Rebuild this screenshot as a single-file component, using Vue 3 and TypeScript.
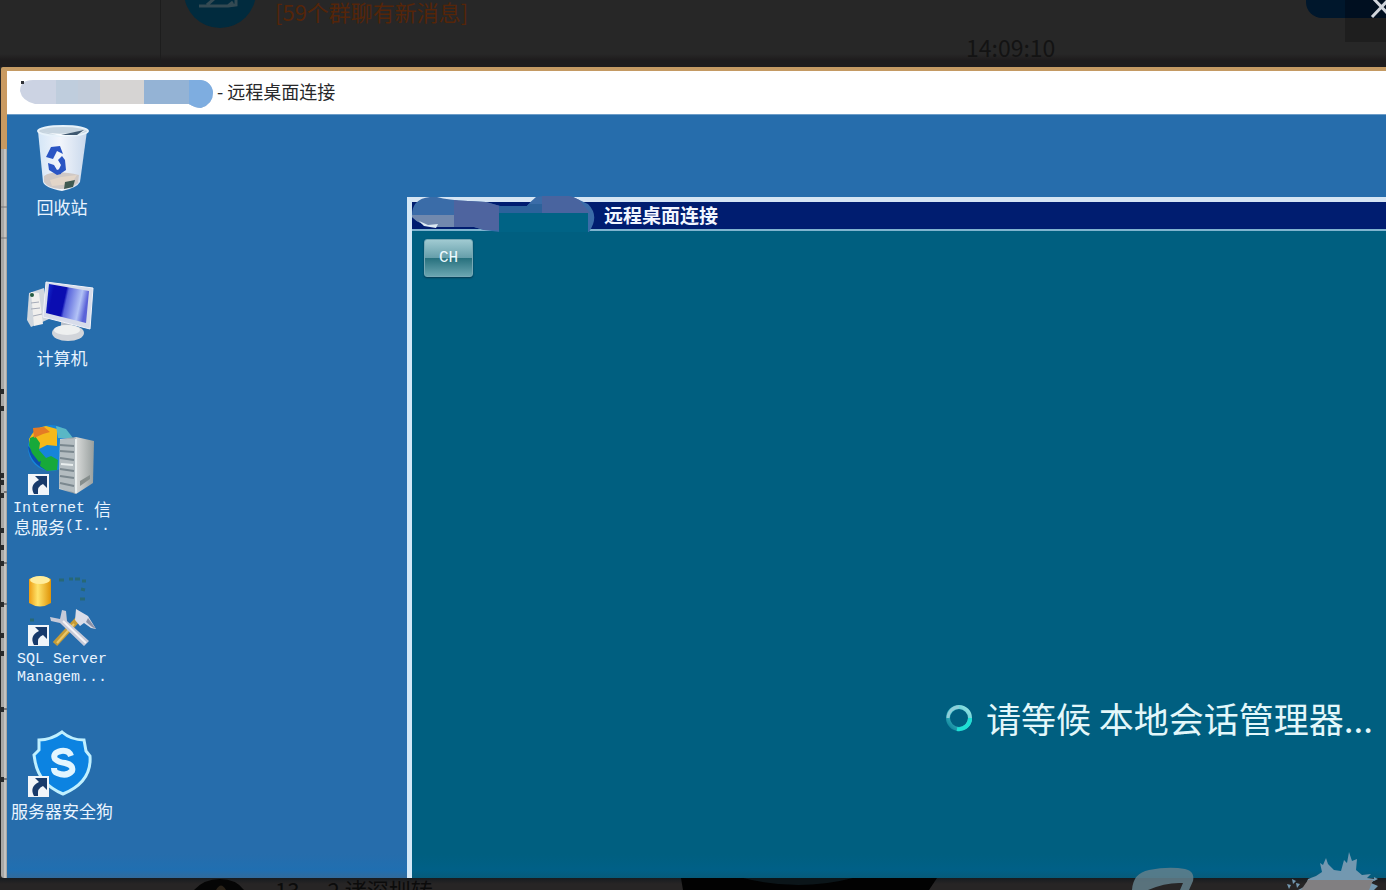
<script setup lang="ts">
interface DesktopItem {
  id: string
  lines: { text: string; latin?: boolean }[][]
  shortcut: boolean
}

const items: DesktopItem[] = [
  { id: 'bin', lines: [[{ text: '回收站' }]], shortcut: false },
  { id: 'computer', lines: [[{ text: '计算机' }]], shortcut: false },
  {
    id: 'iis',
    lines: [
      [{ text: 'Internet ', latin: true }, { text: '信' }],
      [{ text: '息服务' }, { text: '(I...', latin: true }],
    ],
    shortcut: true,
  },
  {
    id: 'sql',
    lines: [[{ text: 'SQL Server', latin: true }], [{ text: 'Managem...', latin: true }]],
    shortcut: true,
  },
  { id: 'dog', lines: [[{ text: '服务器安全狗' }]], shortcut: true },
]

const edgeMarks: number[] = [318, 335, 402, 409, 422, 457, 474, 490, 531, 562, 580, 636, 706]
</script>

<template>
  <div class="page">
    <header class="chat-top">
      <div class="chat-list">
        <svg class="avatar" width="72" height="28" viewBox="0 0 72 28" aria-hidden="true">
          <circle cx="36" cy="-8" r="36" fill="#012b3e" />
          <path d="M15 6h29l5-4M23 5l8-7M44 6l8-1V-3" fill="none" stroke="#344a53" stroke-width="3" />
        </svg>
        <span class="unread">[59个群聊有新消息]</span>
      </div>
      <time class="stamp">14:09:10</time>
      <div class="corner">
        <span class="bubble"></span>
        <button class="close" type="button" aria-label="关闭">
          <svg width="41" height="42" viewBox="0 0 41 42" aria-hidden="true">
            <path d="M27 17L46 -3M27 -3L46 17" stroke="#d0d5dc" stroke-width="3" fill="none" />
          </svg>
        </button>
      </div>
    </header>

    <main class="window">
      <svg class="edge" width="6" height="807" viewBox="0 0 6 807" aria-hidden="true">
        <rect width="6" height="807" fill="#a9a8a6" />
        <rect x="3" width="2" height="807" fill="#c5c3c0" />
        <rect width="6" height="78" fill="#c99a61" />
        <path d="M0 136h6M0 167h6" stroke="#77777a" />
        <rect v-for="y in edgeMarks" :key="y" :y="y" width="3" height="5" fill="#282a2c" />
        <path d="M3 421h3M3 492h3M3 533h3M3 638h3M3 708h3" stroke="#77777a" stroke-width="2" />
      </svg>
      <div class="frame">
        <div class="titlebar">
          <svg class="mask" width="196" height="32" viewBox="0 0 196 32" aria-hidden="true">
            <clipPath id="pill"><path d="M14 4H182A13 13 0 0 1 194 17Q194 28 182 32Q176 32 170 28H16Q3 25 1 15Q1 4 14 4Z" /></clipPath>
            <g clip-path="url(#pill)">
              <rect width="196" height="32" fill="#ccd3e3" />
              <rect x="37" width="22" height="32" fill="#bfcddd" />
              <rect x="59" width="24" height="32" fill="#c2ccda" />
              <rect x="81" width="44" height="32" fill="#d6d4d3" />
              <rect x="125" width="46" height="32" fill="#94b3d5" />
              <rect x="170" width="26" height="32" fill="#7eade0" />
            </g>
            <rect x="2" y="5" width="3" height="3" fill="#303238" />
          </svg>
          <h1 class="title">- 远程桌面连接</h1>
        </div>

        <div class="desktop">
          <nav class="icons" aria-label="桌面">
            <a v-for="item in items" :key="item.id" class="item" href="#">
              <svg class="icon" width="72" height="72" viewBox="0 0 72 72" aria-hidden="true">
                <defs>
                  <linearGradient id="binFill" x1="0" x2="1">
                    <stop offset="0" stop-color="#d4e6f7" /><stop offset=".45" stop-color="#f2f5fb" /><stop offset="1" stop-color="#c8d8ec" />
                  </linearGradient>
                  <linearGradient id="screen" x1="0" x2="1" y2=".2">
                    <stop offset="0" stop-color="#1736d6" /><stop offset=".2" stop-color="#0a0db1" /><stop offset=".48" stop-color="#0a0db1" /><stop offset=".54" stop-color="#5965dc" /><stop offset=".85" stop-color="#b3c3f6" /><stop offset="1" stop-color="#5b63d8" />
                  </linearGradient>
                  <linearGradient id="tower" x1="0" x2="1">
                    <stop offset="0" stop-color="#d1d7d8" /><stop offset=".4" stop-color="#8b979e" /><stop offset=".5" stop-color="#d7d9d8" /><stop offset="1" stop-color="#989f9e" />
                  </linearGradient>
                  <linearGradient id="gold" x1="0" x2="1">
                    <stop offset="0" stop-color="#ed9c12" /><stop offset=".4" stop-color="#ffe46b" /><stop offset="1" stop-color="#df9307" />
                  </linearGradient>
                </defs>

                <g v-if="item.id === 'bin'">
                  <path d="M12 9L17 60Q19 66 36 69Q51 66 54 60L61 9Z" fill="url(#binFill)" />
                  <path d="M18 54Q28 47 53 53L52 61Q45 67 34 67Q22 66 18 60Z" fill="#cfc8c5" />
                  <path d="M24 58l11-3 16-2-6 9-19 2z" fill="#e2d5c8" />
                  <path d="M39 60l10-2-2 7-9 2z" fill="#3f5951" />
                  <ellipse cx="37" cy="9" rx="25" ry="5" fill="#c6d4df" stroke="#e7f2fa" stroke-width="2" />
                  <path d="M14 9Q33 15 61 8Q48 15 35 14Z" fill="#f7fbfe" />
                  <path d="M35 13l23-5-7 5z" fill="#3e5870" />
                  <path d="M20 35l5-10 9-1 3 8-6-3-4 8zM36 34l3 4 1 10-6 4-2-3 3-6-3-5zM31 53l-8-5-1-7 6 2 3 5 5-2-1 6z" fill="#2a55c4" />
                </g>

                <g v-else-if="item.id === 'computer'">
                  <path d="M3 20l15-5 5 31-18 8-4-7z" fill="#cfd6dd" />
                  <path d="M5 19l8 1 4 31-9 2z" fill="#f0efed" />
                  <path d="M5 30l8-1M5 36l9-1M7 43l9-2" stroke="#a5abb8" />
                  <circle cx="6" cy="22" r="2" fill="#245c42" />
                  <path d="M35 48l11 3v8h-11z" fill="#b7bfc9" />
                  <ellipse cx="42" cy="60" rx="16" ry="8" fill="#d2d5da" />
                  <ellipse cx="41" cy="57" rx="13" ry="5" fill="#eef0f0" />
                  <path d="M20 9L67 15L64 56L17 44Z" fill="#d7dcea" stroke="#f2f3fa" />
                  <path d="M23 11L63 18L60 50L20 40Z" fill="url(#screen)" />
                </g>

                <g v-else-if="item.id === 'iis'">
                  <circle cx="25" cy="24" r="23" fill="#1685d8" />
                  <path d="M2 22Q4 40 22 47L20 36L10 30Z" fill="#0c4fae" />
                  <path d="M3 15Q9 3 20 2L31 5V22L21 21L13 25L4 21Z" fill="#f5b91a" />
                  <path d="M4 14l5-2 5 7-1 7 7 8-7 4-7-9-3-8zM15 36l10-4 7 4-1 10-10 1-7-5z" fill="#17a93a" />
                  <path d="M7 4l11-1 6 5-7 2-9 4z" fill="#e47b25" />
                  <path d="M30 2l10 3 7 9H32z" fill="#59b7c5" />
                  <path d="M34 15L50 13L68 17L67 59L50 70L33 65Z" fill="url(#tower)" />
                  <path d="M34 16L50 14V69L33 64Z" fill="#b4bdc1" />
                  <path d="M34 21l14 1M34 27l14 1M34 34l14 2M34 45l14 2M34 52l14 2M34 59l14 3" stroke="#7b888f" stroke-width="2" />
                  <path d="M35 40l12 1M50 15v54" stroke="#e9eeee" stroke-width="2" />
                  <path d="M54 57l10-6v4l-10 7z" fill="#868e8d" />
                </g>

                <g v-else-if="item.id === 'sql'">
                  <path d="M3 4Q14 -1 25 4V28Q14 35 3 28Z" fill="url(#gold)" />
                  <ellipse cx="14" cy="5" rx="10" ry="4" fill="#ffed9c" />
                  <path d="M33 5h5M43 4h4M49 4h5M56 6h4M55 14l4 1M54 24h5M4 45h4" stroke="#276876" stroke-width="3" />
                  <path d="M29 69L54 42" stroke="#c49b37" stroke-width="6" />
                  <path d="M31 68L48 49" stroke="#e8c76a" stroke-width="2" />
                  <path d="M24 42l10 2 2-9 4 1 1 10L63 66l-5 5L34 48l-9-2z" fill="#c7cad8" />
                  <path d="M37 46l23 22" stroke="#f4f3f6" stroke-width="2" />
                  <path d="M50 34l12 7 8 13-5-1-7-5-4 3-5-6z" fill="#dbdde8" />
                  <path d="M62 43l8 11-4-2-6-5z" fill="#8b92a8" />
                </g>

                <g v-else>
                  <path d="M36 6Q45 14 58 14L60 25L64 30Q66 56 37 68Q13 58 9 35L8 29L13 24V14Q25 14 36 6Z" fill="#0c83e1" stroke="#c0f0ff" stroke-width="3" />
                  <path d="M45 30Q43 24 35 25Q26 27 29 33Q32 36 39 37Q48 39 46 45Q41 51 31 47Q28 46 28 42" fill="none" stroke="#e2f5ff" stroke-width="6" />
                </g>

                <g v-if="item.shortcut">
                  <rect x="2" y="50" width="21" height="21" fill="#f1f5f9" />
                  <path d="M9 52h12v12l-4-4q-6 2-5 10H8q-5-9 5-14z" fill="#173a6b" />
                </g>
              </svg>
              <span v-for="(line, i) in item.lines" :key="i" class="line">
                <span v-for="part in line" :key="part.text" :class="{ latin: part.latin }">{{ part.text }}</span>
              </span>
            </a>
          </nav>

          <section class="session">
            <div class="session-bar">
              <h2 class="session-title">远程桌面连接</h2>
            </div>
            <svg class="session-mask" width="190" height="38" viewBox="0 0 190 38" aria-hidden="true">
              <clipPath id="blob">
                <path d="M4 21Q3 3 22 1H29Q40 4 60 5L78 6L92 10L119 10Q122 6 128 1Q150 -3 165 1L180 8Q192 20 181 36H92L76 34L66 31H30Q12 30 4 21Z" />
              </clipPath>
              <g clip-path="url(#blob)">
                <rect width="190" height="38" fill="#3a6ca8" />
                <path d="M4 19H46V34H4Z" fill="#7189ae" />
                <path d="M46 4H91V34H46Z" fill="#4e649f" />
                <path d="M91 8h44v10H91z" fill="#2c629b" />
                <path d="M134 0h34l14 17h-48z" fill="#49649f" />
                <path d="M91 17H180V38H91Z" fill="#006385" />
              </g>
              <path d="M11 25l9 4 10-1-2 4-12-2z" fill="#dce9f3" />
            </svg>
            <div class="session-body">
              <button class="lang" type="button">CH</button>
              <p class="waiting" role="status">
                <svg width="28" height="28" viewBox="0 0 28 28" aria-hidden="true">
                  <defs>
                    <linearGradient id="ring" x1="0" y1="1" x2="1" y2="0">
                      <stop offset="0" stop-color="#097c95" /><stop offset=".5" stop-color="#45c4cc" /><stop offset="1" stop-color="#9fe6e6" />
                    </linearGradient>
                  </defs>
                  <circle cx="14" cy="14" r="11" fill="none" stroke="url(#ring)" stroke-width="4" />
                  <path d="M25 14A11 11 0 0 1 12 25" fill="none" stroke="#1de0d5" stroke-width="4" />
                  <path d="M3 14A11 11 0 0 1 14 3" fill="none" stroke="#8fcdd8" stroke-width="3" />
                </svg>
                <span>请等候 本地会话管理器...</span>
              </p>
            </div>
          </section>
        </div>
      </div>
    </main>

    <footer class="chat-bottom">
      <svg class="peer" width="72" height="12" viewBox="0 0 72 12" aria-hidden="true">
        <path d="M12 12Q22 1 38 1Q54 1 62 12Z" fill="#050505" />
        <path d="M34 12q5-9 10 0z" fill="#292117" />
      </svg>
      <span class="peer-name">13 ... 2 诸深圳转</span>
      <svg class="shade" width="256" height="12" viewBox="0 0 256 12" aria-hidden="true">
        <path d="M0 0H256L248 12H2Z" fill="#020202" />
        <path d="M62 0H172Q118 14 62 0Z" fill="#0b1519" />
      </svg>
    </footer>

    <svg class="watermark" width="256" height="40" viewBox="0 0 256 40" aria-hidden="true">
      <path d="M2 40Q3 23 19 20Q39 16 55 19Q65 21 63 31L59 40H50L53 33Q36 32 18 40Z" fill="#63808c" opacity=".85" />
      <path d="M168 40L176 36L178 29L186 26L192 22L190 13L193 15L196 8L198 14L204 20L211 21L214 10L217 13L219 2L222 11L227 9L226 20L232 25L241 24L237 28L246 29L241 33L248 36L244 40Z" fill="#7398b0" />
      <path d="M171 40L178 30H243L239 40Z" fill="#817f81" />
      <path d="M162 29l4 2-3 3zM157 34l4 1-2 4zM166 33l4 1-3 4zM244 27l4 2-4 2z" fill="#7398b0" />
    </svg>
  </div>
</template>

<style>
body {
  margin: 0;
  background: #272727;
}
</style>

<style scoped>
.page {
  position: relative;
  display: grid;
  grid-template-rows: 67px 1fr 12px;
  min-height: 100vh;
  overflow: hidden;
  background: #272727;
  font-family: "Noto Sans CJK SC", sans-serif;
}

.chat-top {
  display: flex;
  justify-content: space-between;
  height: 67px;
  background: linear-gradient(#272727 54px, #1e1c1d 60px);
}

.chat-list {
  display: flex;
  gap: 19px;
  width: 780px;
  margin-left: 160px;
  padding-left: 23px;
  box-sizing: border-box;
  border-left: 1px solid #1d1d1d;
}

.avatar {
  flex: none;
}

.unread {
  color: #552509;
  font-size: 22px;
  line-height: 22px;
}

.stamp {
  flex: 1;
  padding: 34px 0 0 26px;
  color: #131313;
  font-size: 23px;
  line-height: 26px;
}

.corner {
  display: flex;
  width: 80px;
}

.bubble {
  width: 39px;
  height: 18px;
  border-radius: 0 0 0 16px;
  background: #00172c;
}

.close {
  width: 41px;
  height: 42px;
  padding: 0;
  border: 0;
  background: linear-gradient(#000f20 18px, #1e1e1e 18px);
}

.close svg {
  display: block;
}

.window {
  display: flex;
  margin-left: 1px;
  border-top: 4px solid #c49a63;
  border-radius: 2px 0 0 3px;
  overflow: hidden;
}

.edge {
  flex: none;
}

.frame {
  display: flex;
  flex: 1;
  flex-direction: column;
  min-width: 0;
}

.titlebar {
  display: flex;
  gap: 2px;
  height: 43px;
  padding: 5px 0 0 12px;
  box-sizing: border-box;
  background: #fff;
}

.title,
.session-title {
  margin: 0;
  font-weight: 400;
  line-height: 30px;
  white-space: nowrap;
}

.title {
  color: #28282a;
  font-size: 18px;
}

.desktop {
  display: flex;
  flex: 1;
  border-top: 1px solid #6d9dc8;
  background: linear-gradient(#266dac, #266dac calc(100% - 24px), #206fb1 calc(100% - 8px), #316a9b);
}

.icons {
  display: grid;
  grid-auto-rows: 151px;
  align-content: start;
  width: 110px;
  margin-right: 290px;
  padding-top: 7px;
}

.item {
  display: flex;
  flex-direction: column;
  align-items: center;
  color: #e9f4ff;
  font-size: 17px;
  line-height: 18px;
  text-decoration: none;
}

.icon {
  margin-bottom: 4px;
}

.line {
  display: flex;
  align-items: center;
  height: 18px;
  white-space: pre;
}

.latin {
  font-family: "Liberation Mono", monospace;
  font-size: 15px;
  line-height: 16px;
}

.session {
  position: relative;
  display: flex;
  flex: 1;
  flex-direction: column;
  margin-top: 82px;
  border-top: 5px solid #d5e5f4;
  border-left: 5px solid #d3e8f7;
}

.session-bar {
  height: 27px;
  padding-left: 192px;
  border-bottom: 2px solid #7fb4cf;
  background: #001d70;
}

.session-title {
  color: #f2f6ff;
  font-size: 19px;
  font-weight: 700;
  line-height: 26px;
}

.session-mask {
  position: absolute;
  top: -6px;
  left: -4px;
}

.session-body {
  display: flex;
  flex: 1;
  flex-direction: column;
  align-items: flex-start;
  justify-content: space-between;
  padding: 8px 13px 134px 12px;
  background: linear-gradient(#005f80, #005f80 calc(100% - 24px), #006087 calc(100% - 8px), #075a79);
}

.lang {
  width: 49px;
  height: 38px;
  padding: 0;
  border: 1px solid #78a8b5;
  border-radius: 3px;
  background: linear-gradient(#a0cad1, #659eaa 50%, #28717e 51%, #6aa5b0);
  box-shadow: 0 1px 2px #07394e;
  color: #eefaff;
  font-family: "Liberation Mono", monospace;
  font-size: 16px;
}

.waiting {
  display: flex;
  align-self: flex-end;
  align-items: center;
  gap: 13px;
  margin: 0;
  color: #e3f7fa;
  font-size: 35px;
  line-height: 52px;
  white-space: pre;
}

.chat-bottom {
  display: flex;
  height: 12px;
  overflow: hidden;
  padding-left: 182px;
  background: linear-gradient(#171c20, #272525 6px);
}

.peer,
.shade {
  flex: none;
}

.peer-name {
  width: 406px;
  margin-left: 21px;
  color: #0b0b0b;
  font-size: 22px;
  line-height: 22px;
}

.watermark {
  position: absolute;
  right: 0;
  bottom: 0;
}
</style>
